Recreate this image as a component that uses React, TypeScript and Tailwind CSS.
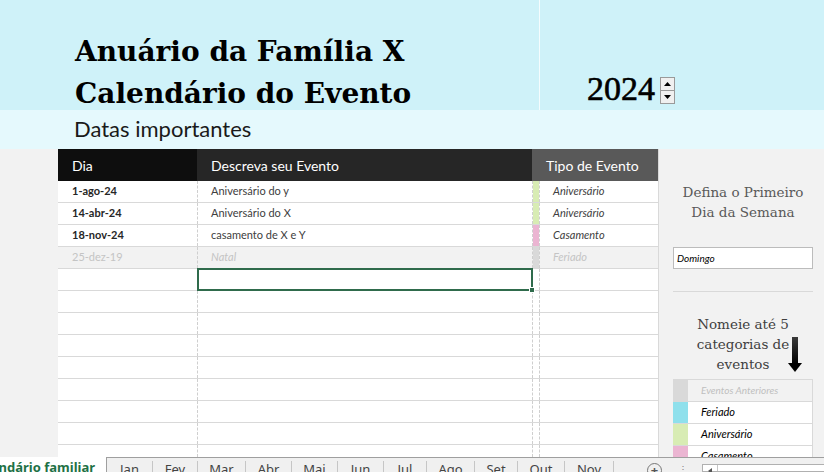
import React from "react";

type Row = {
  dia: string;
  desc: string;
  tipo: string;
  strip: string;
  past?: boolean;
};

const events: Row[] = [
  { dia: "1-ago-24", desc: "Aniversário do y", tipo: "Aniversário", strip: "bg-[#d8ecb4]" },
  { dia: "14-abr-24", desc: "Aniversário do X", tipo: "Aniversário", strip: "bg-[#d8ecb4]" },
  { dia: "18-nov-24", desc: "casamento de X e Y", tipo: "Casamento", strip: "bg-[#ebb5d2]" },
  { dia: "25-dez-19", desc: "Natal", tipo: "Feriado", strip: "bg-[#d9d9d9]", past: true },
];

const emptyRows = 9;

const months: [string, number][] = [
  ["Jan", 46],
  ["Fev", 45],
  ["Mar", 48],
  ["Abr", 46],
  ["Mai", 46],
  ["Jun", 46],
  ["Jul", 43],
  ["Ago", 48],
  ["Set", 43],
  ["Out", 47],
  ["Nov", 49],
];

const categories = [
  { label: "Eventos Anteriores", swatch: "bg-[#d9d9d9]", muted: true },
  { label: "Feriado", swatch: "bg-[#8fe0ec]" },
  { label: "Aniversário", swatch: "bg-[#d8ecb4]" },
  { label: "Casamento", swatch: "bg-[#ebb5d2]" },
];

function EventRow({ row, selected }: { row?: Row; selected?: boolean }) {
  return (
    <div
      className={`grid grid-cols-[139px_335px_126px] h-[22px] border-b border-[#d9d9d9] text-[11px] ${
        row?.past ? "bg-[#f2f2f2]" : "bg-white"
      }`}
    >
      <div
        className={`flex items-center pl-[14px] ${
          row?.past ? "text-[#c4c4c4]" : "font-bold text-[#262626]"
        }`}
      >
        {row?.dia}
      </div>
      <div
        className={`relative flex items-center pl-[13px] border-l border-dashed border-[#cfcfcf] ${
          row?.past ? "italic text-[#c4c4c4]" : "text-[#404040]"
        }`}
      >
        {row?.desc}
        {selected && (
          <div className="absolute left-[-1px] top-[-1px] right-[-1px] bottom-[-1px] border-2 border-[#2f6b4c]">
            <div className="absolute right-[-4px] bottom-[-4px] w-[6px] h-[6px] bg-[#2f6b4c] border border-white" />
          </div>
        )}
      </div>
      <div className="flex border-l border-dashed border-[#cfcfcf]">
        <div className={`w-[6px] ${row ? row.strip : ""}`} />
        <div
          className={`flex-1 flex items-center pl-[13px] italic border-l border-dashed border-[#cfcfcf] ${
            row?.past ? "text-[#c4c4c4]" : "text-[#404040]"
          }`}
        >
          {row?.tipo}
        </div>
      </div>
    </div>
  );
}

function Spinner() {
  return (
    <div className="flex flex-col w-[15px] h-[27px] mt-[5px] ml-[5px]">
      <div className="flex-1 flex items-center justify-center bg-[#f0f0f0] border border-[#9a9a9a]">
        <svg width="7" height="4" viewBox="0 0 7 4">
          <path d="M0 4 L3.5 0 L7 4 Z" fill="#000" />
        </svg>
      </div>
      <div className="flex-1 flex items-center justify-center bg-[#f0f0f0] border border-t-0 border-[#9a9a9a]">
        <svg width="7" height="4" viewBox="0 0 7 4">
          <path d="M0 0 L7 0 L3.5 4 Z" fill="#000" />
        </svg>
      </div>
    </div>
  );
}

export default function App() {
  return (
    <div className="w-[824px] h-[472px] overflow-hidden flex flex-col bg-[#f2f2f2] font-['Lato',sans-serif]">
      {/* title band */}
      <div className="h-[110px] grid grid-cols-[540px_1fr] bg-[#cff2f9]">
        <div className="border-r border-white/80 pl-[75px] pt-[31px] font-['DejaVu_Serif',serif] font-bold text-[28px] leading-[42px] text-black whitespace-nowrap">
          <div>Anuário da Família X</div>
          <div>Calendário do Evento</div>
        </div>
        <div className="flex items-start pl-[47px] pt-[72px]">
          <span className="font-['Liberation_Serif',serif] text-[34px] leading-none text-black [-webkit-text-stroke:0.6px_black]">
            2024
          </span>
          <Spinner />
        </div>
      </div>

      <div className="h-[39px] bg-[#e5f9fd] pl-[74px] pt-[8px] text-[22px] leading-none text-[#1a1a1a]">
        Datas importantes
      </div>

      {/* sheet body */}
      <div className="h-[308px] flex overflow-hidden">
        <div className="w-[58px]" />

        <div className="w-[601px] bg-white border-r border-[#d9d9d9]">
          <div className="grid grid-cols-[139px_335px_126px] h-[32px] text-[14px] text-white">
            <div className="bg-[#0e0e0e] flex items-center pl-[14px]">Dia</div>
            <div className="bg-[#262626] flex items-center pl-[14px]">Descreva seu Evento</div>
            <div className="bg-[#595959] flex items-center pl-[14px]">Tipo de Evento</div>
          </div>
          {events.map((r) => (
            <EventRow key={r.dia} row={r} />
          ))}
          {Array.from({ length: emptyRows }).map((_, i) => (
            <EventRow key={i} selected={i === 0} />
          ))}
        </div>

        <div className="flex-1 pl-[14px] pr-[11px] pt-[33px]">
          <div className="text-center font-['DejaVu_Serif',serif] text-[13.5px] leading-[20px] text-[#595959]">
            Defina o Primeiro
            <br />
            Dia da Semana
          </div>
          <div className="mt-[25px] h-[22px] bg-white border border-[#bcbcbc] flex items-center pl-[3px] text-[10px] italic text-black">
            Domingo
          </div>
          <div className="mt-[22px] h-px bg-[#d9d9d9]" />
          <div className="relative mt-[22px] text-center font-['DejaVu_Serif',serif] text-[13.5px] leading-[20px] text-[#404040]">
            Nomeie até 5
            <br />
            categorias de
            <br />
            eventos
            <svg
              className="absolute left-[115px] top-[23px]"
              width="14"
              height="35"
              viewBox="0 0 14 35"
            >
              <defs>
                <linearGradient id="shaft" x1="0" y1="0" x2="0" y2="1">
                  <stop offset="0" stopColor="#3a3a3a" />
                  <stop offset="1" stopColor="#000" />
                </linearGradient>
              </defs>
              <rect x="4" y="0" width="6" height="27" fill="url(#shaft)" />
              <path d="M0 26 L14 26 L7 35 Z" fill="#000" />
            </svg>
          </div>
          <div className="mt-[5px] border-t border-r border-[#d9d9d9]">
            {categories.map((c) => (
              <div
                key={c.label}
                className={`flex h-[22px] border-b border-[#d9d9d9] ${c.muted ? "bg-[#f2f2f2]" : "bg-white"}`}
              >
                <div className={`w-[15px] ${c.swatch}`} />
                <div
                  className={`flex items-center pl-[13px] italic ${
                    c.muted ? "text-[10px] text-[#bfbfbf]" : "text-[11px] text-black"
                  }`}
                >
                  {c.label}
                </div>
              </div>
            ))}
          </div>
        </div>
      </div>

      {/* sheet tabs */}
      <div className="h-[15px] flex font-['Noto_Sans',sans-serif] overflow-hidden">
        <div className="w-[106px] bg-white flex justify-end pr-[11px] overflow-hidden">
          <span className="whitespace-nowrap text-[13px] font-bold text-[#1e7145] leading-none pt-[4px]">
            Calendário familiar
          </span>
        </div>
        <div className="flex-1 flex bg-[#f0f0f0] border-t border-l border-[#9f9f9f]">
          {months.map(([m, w]) => (
            <div
              key={m}
              style={{ width: w }}
              className="flex justify-center border-r border-[#c6c6c6] mt-[3px] text-[13px] leading-none pt-[2px] text-[#444]"
            >
              {m}
            </div>
          ))}
          <div className="w-[33px]" />
          <div className="mt-[5px] w-[15px] h-[15px] rounded-full border border-[#777] flex justify-center">
            <span className="text-[13px] leading-none text-[#555] font-bold">+</span>
          </div>
          <div className="ml-[16px] mt-[6px] text-[10px] leading-none text-[#888]">⋮</div>
          <div className="ml-[14px] mt-[6px] flex-1 bg-white border border-r-0 border-[#b0b0b0] flex">
            <div className="w-[15px] border-r border-[#c6c6c6] flex justify-center pt-[3px]">
              <svg width="4" height="6" viewBox="0 0 4 6">
                <path d="M4 0 L0 3 L4 6 Z" fill="#555" />
              </svg>
            </div>
          </div>
        </div>
      </div>
    </div>
  );
}
